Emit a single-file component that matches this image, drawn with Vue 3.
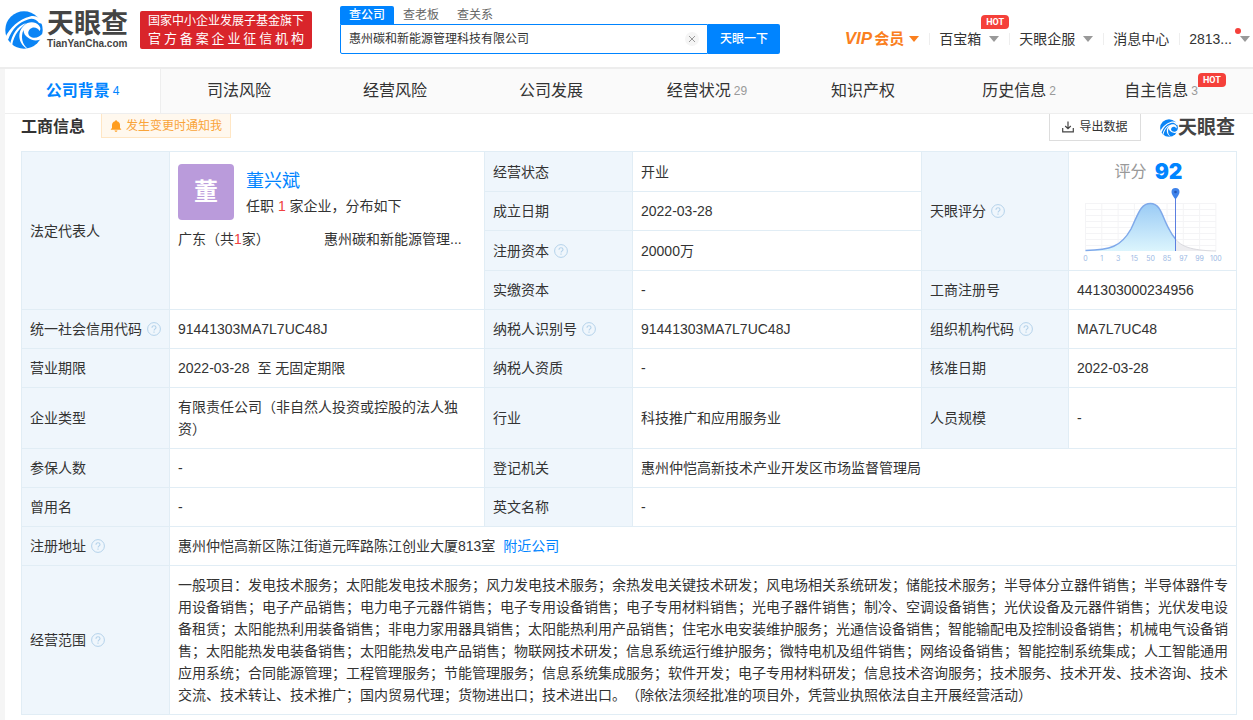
<script setup>
import { ref, h } from 'vue'

const keyword = ref('惠州碳和新能源管理科技有限公司')

const searchTabs = ['查公司', '查老板', '查关系']

const menu = [
  { text: '百宝箱', caret: true, hot: true },
  { text: '天眼企服', caret: true },
  { text: '消息中心' },
  { text: '2813...', caret: true, dot: true }
]

const tabs = [
  { text: '公司背景', count: 4, active: true },
  { text: '司法风险' },
  { text: '经营风险' },
  { text: '公司发展' },
  { text: '经营状况', count: 29 },
  { text: '知识产权' },
  { text: '历史信息', count: 2 },
  { text: '自主信息', count: 3, hot: true }
]

const columns = [148, 315, 148, 289, 147, 168]
const scale = [0, 1, 3, 15, 50, 85, 97, 99, 100]
const gridX = scale.map((_, i) => 7.5 + i * 16.3)
const gridY = [16, 22, 28, 34, 40, 46, 52, 58]

const HelpIcon = () =>
  h('svg', { class: 'help', width: 14, height: 14, viewBox: '0 0 14 14', fill: 'none', stroke: '#b4d2ea' }, [
    h('circle', { cx: 7, cy: 7, r: 6.4 }),
    h('path', { d: 'M5 5.7c0-1.2.8-2 2-2s2 .8 2 1.8c0 1.3-1.9 1.5-1.9 3M7 9.6v1.1', 'stroke-width': 1.1 })
  ])

const Swirl = () =>
  h('svg', { class: 'swirl', viewBox: '0 0 38 38' }, [
    h('circle', { cx: 19, cy: 19, r: 18.7, fill: '#0a84f5' }),
    h('path', { d: 'M0 27C5 16 14 8.500 25 5.500C31 4 36 7 38 13L34 12C31 8 27 7 23 8.500C14 11 7 18 3 29Z', fill: '#fff' }),
    h('path', { d: 'M5 34C7 23 12 15.500 21 12C16 17 9 22 7 35Z', fill: '#fff' }),
    h('path', { d: 'M23 38C14 34 11 22 19 14.500C23 10.500 30 10 34 14.500C36 17 35.500 19 34.500 20C33 16.500 28 15 25 18C22 21 23 25 27 26.500C31 27.500 35 26 38 22L37 28C33 30 27 30 23.500 27C20 25 18.500 22 18.500 19C15.500 26 17 33 23 38Z', fill: '#fff' })
  ])
</script>

<template>
  <div class="page">
    <header class="header">
      <a class="brand" href="#" aria-label="天眼查">
        <Swirl />
        <span class="brand-text">
          <span class="brand-cn">天眼查</span>
          <span class="brand-en">TianYanCha.com</span>
        </span>
      </a>
      <div class="slogan">
        <div>国家中小企业发展子基金旗下</div>
        <div class="slogan-second">官方备案企业征信机构</div>
      </div>

      <form class="search" @submit.prevent>
        <div class="search-tabs">
          <button v-for="(t, i) in searchTabs" :key="t" type="button" :class="{ on: i === 0 }">{{ t }}</button>
        </div>
        <div class="search-row">
          <div class="field">
            <input v-model="keyword" type="text" aria-label="公司名称">
            <button class="clear" type="button" aria-label="清空" @click="keyword = ''">
              <svg width="8" height="8" viewBox="0 0 8 8" stroke="#999" fill="none"><path d="M1 1l6 6M7 1L1 7" /></svg>
            </button>
          </div>
          <button class="submit" type="submit">天眼一下</button>
        </div>
      </form>

      <nav class="menu">
        <a href="#" class="vip"><i>VIP</i><b>会员</b><span class="caret"></span></a>
        <a v-for="m in menu" :key="m.text" href="#">
          {{ m.text }}<span v-if="m.caret" class="caret"></span>
          <span v-if="m.hot" class="hot menu-hot">HOT</span>
          <span v-if="m.dot" class="dot"></span>
        </a>
      </nav>
    </header>

    <div class="body">
      <nav class="tabs">
        <a v-for="t in tabs" :key="t.text" href="#" :class="{ active: t.active }">
          <span class="tab-name">{{ t.text }}</span>
          <span v-if="t.count" class="count">{{ t.count }}</span>
          <span v-if="t.hot" class="hot tab-hot">HOT</span>
        </a>
      </nav>

      <main class="content">
        <div class="title-bar">
          <h2>工商信息</h2>
          <button class="notify" type="button">
            <svg width="12" height="12" viewBox="0 0 12 12" fill="#ff9d1e">
              <path d="M6 0.300C6.600 0.300 7 0.700 7 1.200C9 1.700 10 3.200 10 5V8L11.200 9.300V9.800H0.800V9.300L2 8V5C2 3.200 3 1.700 5 1.200C5 0.700 5.400 0.300 6 0.300ZM4.500 10.400H7.500C7.300 11.300 6.800 11.700 6 11.700C5.200 11.700 4.700 11.300 4.500 10.400Z" />
            </svg>
            发生变更时通知我
          </button>
          <button class="export" type="button">
            <svg width="12" height="12" viewBox="0 0 12 12" fill="none" stroke="#444" stroke-width="1.200">
              <path d="M6 0.500V7.500M3.200 5L6 7.700L8.800 5M0.700 7V10.800H11.300V7" />
            </svg>
            导出数据
          </button>
          <div class="mark"><Swirl /><span>天眼查</span></div>
        </div>

        <table>
          <colgroup><col v-for="(w, i) in columns" :key="i" :style="{ width: w + 'px' }"></colgroup>
          <tbody>
            <tr class="tall">
              <th rowspan="4" scope="row">法定代表人</th>
              <td rowspan="4" class="person-cell">
                <div class="person">
                  <div class="avatar">董</div>
                  <div>
                    <a class="name" href="#">董兴斌</a>
                    <div>任职 <em>1</em> 家企业，分布如下</div>
                  </div>
                </div>
                <div class="spread">
                  <span>广东（共<em>1</em>家）</span>
                  <span>惠州碳和新能源管理...</span>
                </div>
              </td>
              <th scope="row">经营状态</th>
              <td>开业</td>
              <th rowspan="3" scope="row">天眼评分<HelpIcon /></th>
              <td rowspan="3" class="score-cell">
                <div class="score"><span>评分</span><strong>92</strong></div>
                <svg class="chart" width="148" height="78" viewBox="0 0 148 78">
                  <defs>
                    <linearGradient id="fill" x1="0" y1="0" x2="0" y2="1">
                      <stop offset="0" stop-color="#9acbf5" />
                      <stop offset="1" stop-color="#dcf5fd" />
                    </linearGradient>
                  </defs>
                  <g stroke="#f4f4f6">
                    <line v-for="x in gridX" :key="'x' + x" :x1="x" :x2="x" y1="16" y2="64" />
                    <line v-for="y in gridY" :key="'y' + y" x1="7" x2="138" :y1="y + 0.5" :y2="y + 0.5" />
                  </g>
                  <path d="M97.500 52C103 59 112 63.500 138 64H97.500Z" fill="#ededf0" />
                  <path d="M97.500 52C103 59 112 63.500 138 64" fill="none" stroke="#d9d9de" />
                  <path d="M7.500 63.500C32 63 43 60 53 42C60 28 62 16.500 72.500 16.500C83 16.500 84 30 91 42Q94 48 97.500 52V64H7.500Z" fill="url(#fill)" />
                  <path d="M7.500 63.500C32 63 43 60 53 42C60 28 62 16.500 72.500 16.500C83 16.500 84 30 91 42Q94 48 97.500 52" fill="none" stroke="#7fa9ea" stroke-width="1.500" />
                  <path d="M97.500 8V64" stroke="#5b7fe0" />
                  <path d="M97.500 12.500C95 9 93.500 7 93.500 5A4 4 0 0 1 101.500 5C101.500 7 100 9 97.500 12.500Z" fill="#3f83ea" />
                  <circle cx="97.500" cy="5" r="1.300" fill="#2456b5" />
                  <g class="ticks">
                    <text v-for="(s, i) in scale" :key="s" :x="gridX[i]" y="74">{{ s }}</text>
                  </g>
                </svg>
              </td>
            </tr>
            <tr><th scope="row">成立日期</th><td>2022-03-28</td></tr>
            <tr class="tall"><th scope="row">注册资本<HelpIcon /></th><td>20000万</td></tr>
            <tr>
              <th scope="row">实缴资本</th><td>-</td>
              <th scope="row">工商注册号</th><td>441303000234956</td>
            </tr>
            <tr>
              <th scope="row">统一社会信用代码<HelpIcon /></th><td>91441303MA7L7UC48J</td>
              <th scope="row">纳税人识别号<HelpIcon /></th><td>91441303MA7L7UC48J</td>
              <th scope="row">组织机构代码<HelpIcon /></th><td>MA7L7UC48</td>
            </tr>
            <tr>
              <th scope="row">营业期限</th><td>2022-03-28&nbsp; 至 无固定期限</td>
              <th scope="row">纳税人资质</th><td>-</td>
              <th scope="row">核准日期</th><td>2022-03-28</td>
            </tr>
            <tr>
              <th scope="row">企业类型</th><td>有限责任公司（非自然人投资或控股的法人独资）</td>
              <th scope="row">行业</th><td>科技推广和应用服务业</td>
              <th scope="row">人员规模</th><td>-</td>
            </tr>
            <tr>
              <th scope="row">参保人数</th><td>-</td>
              <th scope="row">登记机关</th><td colspan="3">惠州仲恺高新技术产业开发区市场监督管理局</td>
            </tr>
            <tr>
              <th scope="row">曾用名</th><td>-</td>
              <th scope="row">英文名称</th><td colspan="3">-</td>
            </tr>
            <tr>
              <th scope="row">注册地址<HelpIcon /></th>
              <td colspan="5">惠州仲恺高新区陈江街道元晖路陈江创业大厦813室<a class="near" href="#">附近公司</a></td>
            </tr>
            <tr>
              <th scope="row">经营范围<HelpIcon /></th>
              <td colspan="5">一般项目：发电技术服务；太阳能发电技术服务；风力发电技术服务；余热发电关键技术研发；风电场相关系统研发；储能技术服务；半导体分立器件销售；半导体器件专用设备销售；电子产品销售；电力电子元器件销售；电子专用设备销售；电子专用材料销售；光电子器件销售；制冷、空调设备销售；光伏设备及元器件销售；光伏发电设备租赁；太阳能热利用装备销售；非电力家用器具销售；太阳能热利用产品销售；住宅水电安装维护服务；光通信设备销售；智能输配电及控制设备销售；机械电气设备销售；太阳能热发电装备销售；太阳能热发电产品销售；物联网技术研发；信息系统运行维护服务；微特电机及组件销售；网络设备销售；智能控制系统集成；人工智能通用应用系统；合同能源管理；工程管理服务；节能管理服务；信息系统集成服务；软件开发；电子专用材料研发；信息技术咨询服务；技术服务、技术开发、技术咨询、技术交流、技术转让、技术推广；国内贸易代理；货物进出口；技术进出口。（除依法须经批准的项目外，凭营业执照依法自主开展经营活动）</td>
            </tr>
          </tbody>
        </table>
      </main>
    </div>
  </div>
</template>

<style>
body {
  background: #f5f5f5;
}
</style>

<style scoped>
.page {
  font: 14px/22px "Liberation Sans", "Noto Sans CJK SC", sans-serif;
  color: #333;
  text-spacing-trim: space-all;
}
.page *,
.page :deep(*) {
  box-sizing: border-box;
}
a {
  color: inherit;
  text-decoration: none;
}
button,
input {
  font: inherit;
  color: inherit;
  margin: 0;
  padding: 0;
  border: 0;
  background: none;
}
em {
  font-style: normal;
  color: #f04040;
}

.header {
  display: flex;
  align-items: flex-start;
  height: 69px;
  padding-left: 5px;
  background: #fff;
  border-bottom: 2px solid #ededed;
}
.brand {
  display: flex;
  gap: 4px;
  margin-top: 11px;
  color: #444;
}
.brand .swirl {
  width: 38px;
  height: 38px;
}
.brand-text {
  display: flex;
  flex-direction: column;
  width: 81px;
  font-weight: 700;
}
.brand-cn {
  font-size: 27px;
  line-height: 27px;
}
.brand-en {
  font-size: 10px;
  line-height: 12px;
}
.slogan {
  width: 172px;
  height: 38px;
  margin: 11px 0 0 12px;
  padding: 1px 8px;
  border-radius: 2px;
  background: #d9252b;
  color: #fff;
  font-size: 12px;
  line-height: 18px;
  white-space: nowrap;
}
.slogan-second {
  font-size: 13px;
  text-align-last: justify;
}

.search {
  width: 440px;
  margin: 6px 0 0 28px;
  font-size: 12px;
}
.search-tabs {
  display: flex;
}
.search-tabs button {
  height: 18px;
  padding: 0 9px;
  line-height: 18px;
  color: #666;
}
.search-tabs .on {
  border-radius: 2px 2px 0 0;
  background: #0084ff;
  color: #fff;
  font-weight: 500;
}
.search-row {
  display: flex;
  height: 30px;
}
.field {
  display: flex;
  flex: 1;
  align-items: center;
  padding: 0 8px;
  border: 1px solid #0084ff;
  border-radius: 0 0 0 2px;
}
.field input {
  flex: 1;
  min-width: 0;
  outline: 0;
}
.clear {
  display: flex;
  align-items: center;
  justify-content: center;
  width: 14px;
  height: 14px;
  border-radius: 50%;
  background: #f5f5f5;
}
.submit {
  width: 72px;
  border-radius: 0 2px 2px 0;
  background: #0084ff;
  color: #fff;
  font-weight: 500;
}

.menu {
  display: flex;
  margin: 28px 0 0 auto;
  white-space: nowrap;
}
.menu a {
  position: relative;
  display: flex;
  align-items: center;
  padding: 0 10px;
}
.menu a + a::before {
  content: "";
  position: absolute;
  left: 0;
  top: 5px;
  height: 12px;
  border-left: 1px solid #eee;
}
.menu a:last-child {
  padding-right: 3px;
}
.caret {
  margin-left: 8px;
  border: 5px solid transparent;
  border-top: 6px solid #999;
  border-bottom: 0;
}
.vip {
  color: #fa7f1e;
}
.vip i {
  margin-right: 2px;
  font-size: 17px;
  font-weight: 700;
}
.vip b {
  font-size: 15px;
}
.vip .caret {
  margin-left: 5px;
  border-top-color: #fa7f1e;
}
.hot {
  width: 28px;
  height: 14px;
  border-radius: 4px 4px 4px 0;
  background: #f5403a;
  color: #fff;
  font: 700 9px/14px Roboto, sans-serif;
  text-align: center;
}
.menu-hot {
  position: absolute;
  right: 0;
  top: -13px;
}
.dot {
  position: absolute;
  right: 12px;
  top: 0;
  width: 6px;
  height: 6px;
  border-radius: 50%;
  background: #f5403a;
}

.body {
  margin-left: 5px;
  background: #fff;
}
.tabs {
  display: grid;
  grid-template-columns: repeat(8, 1fr);
  height: 45px;
  background: #fafafa;
  border-bottom: 1px solid #eee;
}
.tabs a {
  display: flex;
  align-items: center;
  justify-content: center;
}
.tab-name {
  font-size: 16px;
}
.count {
  margin-left: 3px;
  font-size: 12px;
  color: #999;
}
.tabs .active {
  background: #fff;
  border-right: 1px solid #eee;
  color: #0084ff;
}
.active .tab-name {
  font-weight: 700;
}
.active .count {
  color: #0084ff;
}
.tab-hot {
  margin-bottom: 22px;
}

.content {
  padding: 0 16px 5px;
}
.title-bar {
  display: flex;
  align-items: flex-start;
  height: 37px;
}
h2 {
  margin: 0;
  font-size: 16px;
  line-height: 26px;
  font-weight: 700;
}
.notify {
  display: flex;
  align-items: center;
  gap: 4px;
  height: 24px;
  margin-left: 16px;
  padding: 0 8px;
  border: 1px solid #ffe6c4;
  border-top: 0;
  background: #fff8ee;
  color: #f9a43a;
  font-size: 12px;
}
.export {
  display: flex;
  align-items: center;
  justify-content: center;
  gap: 5px;
  width: 92px;
  height: 27px;
  margin-left: auto;
  border: 1px solid #ddd;
  border-top: 0;
  font-size: 12px;
}
.mark {
  display: flex;
  align-items: center;
  margin: 3px 2px 0 19px;
  color: #444;
  font-size: 19px;
  font-weight: 700;
}
.mark .swirl {
  width: 18px;
  height: 18px;
}

table {
  width: 100%;
  table-layout: fixed;
  border-collapse: collapse;
}
tr {
  height: 39px;
}
.tall {
  height: 40px;
}
th,
td {
  padding: 8px;
  border: 1px solid #e1edf5;
  text-align: left;
  font-weight: 400;
}
th {
  background: #eff6fc;
}
:deep(.help) {
  margin-left: 5px;
  vertical-align: -2px;
}
.person-cell {
  vertical-align: top;
  padding-top: 12px;
}
.person {
  display: flex;
  gap: 12px;
  height: 56px;
}
.avatar {
  width: 56px;
  border-radius: 4px;
  background: #ba9bdb;
  color: #fff;
  font-size: 24px;
  font-weight: 700;
  line-height: 56px;
  text-align: center;
}
.name {
  display: block;
  margin: 5px 0 2px;
  font-size: 18px;
  line-height: 24px;
  color: #0084ff;
}
.spread {
  display: grid;
  grid-template-columns: 1fr 1fr;
  margin-top: 8px;
  padding-right: 6px;
  white-space: nowrap;
}
.near {
  margin-left: 8px;
  color: #0084ff;
}
.score-cell {
  padding: 7px 2px 0 0;
  text-align: center;
  vertical-align: top;
}
.score {
  display: flex;
  align-items: center;
  justify-content: center;
  gap: 8px;
  height: 26px;
  padding-right: 6px;
  font-size: 16px;
  color: #999;
}
.score strong {
  color: #0084ff;
  font: 900 21px/26px Inter, sans-serif;
}
.chart {
  display: block;
  margin: 2px auto 0;
}
.ticks {
  fill: #9db9e4;
  font: 7px Inter, sans-serif;
  text-anchor: middle;
}
</style>
